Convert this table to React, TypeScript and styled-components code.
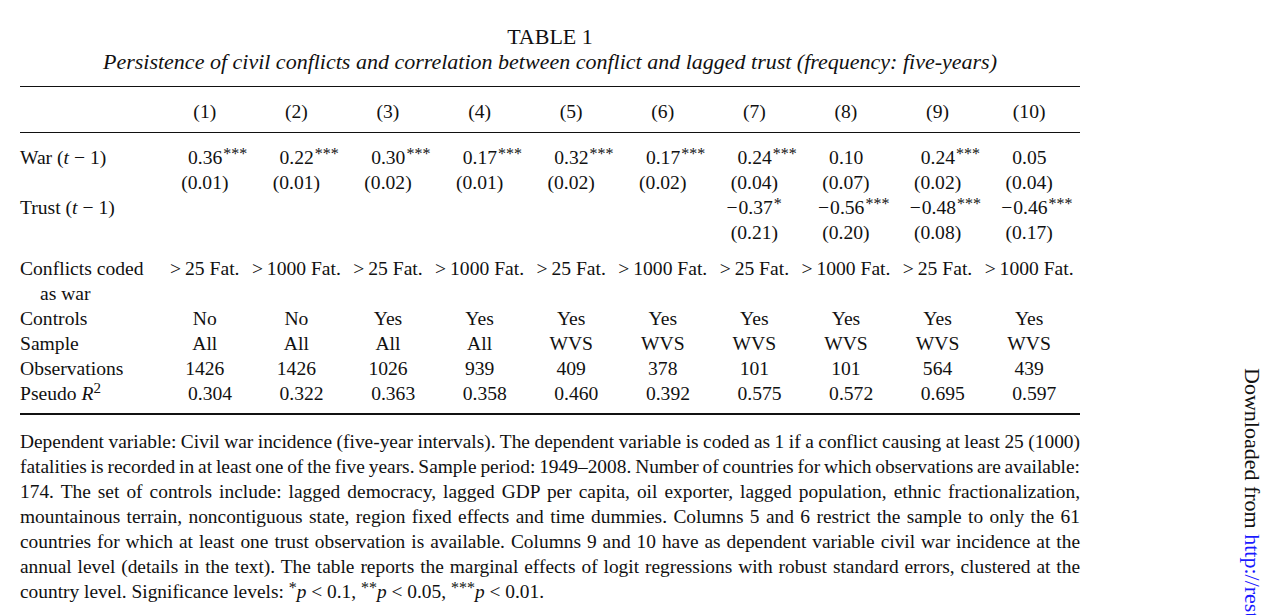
import React from "react";
import styled, { createGlobalStyle } from "styled-components";

const Global = createGlobalStyle`
  html, body { margin: 0; padding: 0; background: #fff; overflow: hidden; }
  body { font-family: "Liberation Serif", "Times New Roman", serif; color: #111; }
`;

const Page = styled.div`
  position: relative;
  width: 1279px;
  height: 615px;
  overflow: hidden;
  padding: 24px 0 0 20px;
  box-sizing: border-box;
`;

const Sheet = styled.div`
  width: 1060px;
  display: flex;
  flex-direction: column;
`;

const Title = styled.div`
  text-align: center;
  font-size: 22px;
  line-height: 25px;
`;

const Subtitle = styled.div`
  text-align: center;
  font-size: 22px;
  font-style: italic;
  line-height: 25px;
`;

const Rule = styled.div<{ $thick?: boolean; $mt: number; $mb: number }>`
  height: ${(p) => (p.$thick ? 2 : 1)}px;
  background: #111;
  margin-top: ${(p) => p.$mt}px;
  margin-bottom: ${(p) => p.$mb}px;
`;

const Row = styled.div<{ $mt?: number }>`
  display: grid;
  grid-template-columns: 139px repeat(10, 91.6px);
  height: 25px;
  line-height: 25px;
  font-size: 19.6px;
  margin-top: ${(p) => p.$mt ?? 0}px;
  white-space: nowrap;
`;

const Label = styled.div<{ $indent?: boolean }>`
  padding-left: ${(p) => (p.$indent ? 20 : 0)}px;
`;

const Cell = styled.div`
  text-align: center;
`;

const Num = styled.span`
  display: inline-block;
  width: 1.72em;
  text-align: left;
  white-space: nowrap;
`;

const Minus = styled.span`
  display: inline-flex;
  width: 0;
  justify-content: flex-end;
  padding-right: 1px;
`;

const Stars = styled.span`
  display: inline-block;
  width: 0;
  font-size: 16px;
  vertical-align: 5px;
  line-height: 0;
  padding-left: 1px;
`;

const Ital = styled.i`
  font-style: italic;
`;

const Sup = styled.sup`
  font-size: 15px;
  vertical-align: 7px;
  line-height: 0;
`;

const NoteSup = styled.sup`
  font-size: 16px;
  vertical-align: 5px;
  line-height: 0;
`;

const Note = styled.div`
  display: flex;
  flex-direction: column;
  font-size: 19.4px;
  line-height: 25px;
  padding-top: 14px;
`;

const NoteLine = styled.div<{ $last?: boolean }>`
  word-spacing: ${(p) => (p.$last ? 0 : -2)}px;
  text-align: ${(p) => (p.$last ? "left" : "justify")};
  text-align-last: ${(p) => (p.$last ? "left" : "justify")};
`;

const Side = styled.div`
  position: absolute;
  left: 1239px;
  top: 368px;
  writing-mode: vertical-rl;
  font-size: 22px;
  white-space: nowrap;
  color: #111;
`;

const Link = styled.span`
  color: #1a1aff;
`;

type Coef = { v: string; s?: string; neg?: boolean } | null;

const NumCell = ({ c }: { c: Coef }) => (
  <Cell>
    {c && (
      <Num>
        {c.neg && <Minus>−</Minus>}
        {c.v}
        {c.s && <Stars>{c.s}</Stars>}
      </Num>
    )}
  </Cell>
);

const war: Coef[] = [
  { v: "0.36", s: "***" },
  { v: "0.22", s: "***" },
  { v: "0.30", s: "***" },
  { v: "0.17", s: "***" },
  { v: "0.32", s: "***" },
  { v: "0.17", s: "***" },
  { v: "0.24", s: "***" },
  { v: "0.10" },
  { v: "0.24", s: "***" },
  { v: "0.05" },
];
const warSe = ["(0.01)", "(0.01)", "(0.02)", "(0.01)", "(0.02)", "(0.02)", "(0.04)", "(0.07)", "(0.02)", "(0.04)"];
const trust: Coef[] = [
  null, null, null, null, null, null,
  { v: "0.37", s: "*", neg: true },
  { v: "0.56", s: "***", neg: true },
  { v: "0.48", s: "***", neg: true },
  { v: "0.46", s: "***", neg: true },
];
const trustSe = ["", "", "", "", "", "", "(0.21)", "(0.20)", "(0.08)", "(0.17)"];
const coded = Array.from({ length: 10 }, (_, i) => (i % 2 === 0 ? ">\u200925 Fat." : ">\u20091000 Fat."));
const controls = ["No", "No", "Yes", "Yes", "Yes", "Yes", "Yes", "Yes", "Yes", "Yes"];
const sample = ["All", "All", "All", "All", "WVS", "WVS", "WVS", "WVS", "WVS", "WVS"];
const obs = ["1426", "1426", "1026", "939", "409", "378", "101", "101", "564", "439"];
const r2 = ["0.304", "0.322", "0.363", "0.358", "0.460", "0.392", "0.575", "0.572", "0.695", "0.597"];

const TextRow = ({ label, values, mt, indent }: { label: React.ReactNode; values: string[]; mt?: number; indent?: boolean }) => (
  <Row $mt={mt}>
    <Label $indent={indent}>{label}</Label>
    {values.map((v, i) => (
      <Cell key={i}>{v}</Cell>
    ))}
  </Row>
);

const noteLines = [
  "Dependent variable: Civil war incidence (five-year intervals). The dependent variable is coded as 1 if a conflict causing at least 25 (1000)",
  "fatalities is recorded in at least one of the five years. Sample period: 1949–2008. Number of countries for which observations are available:",
  "174. The set of controls include: lagged democracy, lagged GDP per capita, oil exporter, lagged population, ethnic fractionalization,",
  "mountainous terrain, noncontiguous state, region fixed effects and time dummies. Columns 5 and 6 restrict the sample to only the 61",
  "countries for which at least one trust observation is available. Columns 9 and 10 have as dependent variable civil war incidence at the",
  "annual level (details in the text). The table reports the marginal effects of logit regressions with robust standard errors, clustered at the",
];

const lt = "\u2005<\u2005";

export default function App() {
  return (
    <>
      <Global />
      <Page>
        <Sheet>
          <Title>TABLE 1</Title>
          <Subtitle>
            Persistence of civil conflicts and correlation between conflict and lagged trust (frequency: five-years)
          </Subtitle>
          <Rule $mt={12} $mb={12} />
          <TextRow label="" values={Array.from({ length: 10 }, (_, i) => `(${i + 1})`)} />
          <Rule $mt={8} $mb={12} />
          <Row>
            <Label>
              War (<Ital>t</Ital> − 1)
            </Label>
            {war.map((c, i) => (
              <NumCell key={i} c={c} />
            ))}
          </Row>
          <TextRow label="" values={warSe} />
          <Row>
            <Label>
              Trust (<Ital>t</Ital> − 1)
            </Label>
            {trust.map((c, i) => (
              <NumCell key={i} c={c} />
            ))}
          </Row>
          <TextRow label="" values={trustSe} />
          <TextRow label="Conflicts coded" values={coded} mt={11} />
          <TextRow label="as war" indent values={Array(10).fill("")} />
          <TextRow label="Controls" values={controls} />
          <TextRow label="Sample" values={sample} />
          <TextRow label="Observations" values={obs} />
          <Row>
            <Label>
              Pseudo <Ital>R</Ital>
              <Sup>2</Sup>
            </Label>
            {r2.map((v, i) => (
              <NumCell key={i} c={{ v }} />
            ))}
          </Row>
          <Rule $thick $mt={7} $mb={0} />
          <Note>
            {noteLines.map((l, i) => (
              <NoteLine key={i}>{l}</NoteLine>
            ))}
            <NoteLine $last>
              country level. Significance levels: <NoteSup>*</NoteSup>
              <Ital>p</Ital>
              {lt}0.1, <NoteSup>**</NoteSup>
              <Ital>p</Ital>
              {lt}0.05, <NoteSup>***</NoteSup>
              <Ital>p</Ital>
              {lt}0.01.
            </NoteLine>
          </Note>
        </Sheet>
        <Side>
          Downloaded from <Link>http://restud.oxfordjournals.org/</Link>
        </Side>
      </Page>
    </>
  );
}
